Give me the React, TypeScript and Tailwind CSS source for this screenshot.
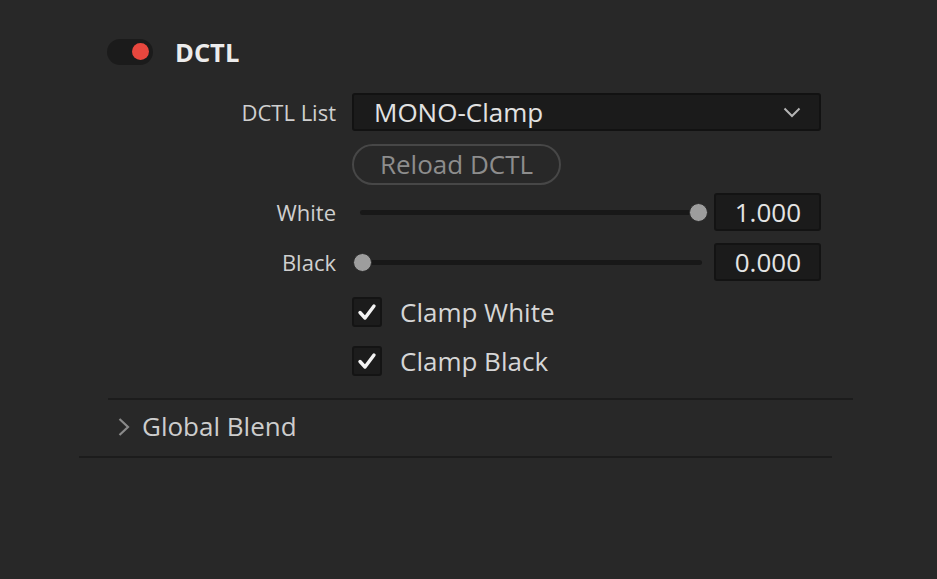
import React from "react";

const font = { fontFamily: '"Open Sans", "Noto Sans", sans-serif' };

function Check() {
  return (
    <div className="w-[30px] h-[30px] rounded-[3px] bg-[#1c1c1c] border-2 border-[#141414] flex items-center justify-center">
      <svg width="20" height="18" viewBox="0 0 20 18">
        <path d="M3 9.5 L8 15 L17 3" fill="none" stroke="#f4f4f4" strokeWidth="3.4" strokeLinecap="round" strokeLinejoin="round" />
      </svg>
    </div>
  );
}

function Slider({ value, label }: { value: number; label: string }) {
  return (
    <div className="flex items-center h-[38px]">
      <div className="w-[245px] text-right pr-[16px] text-[22px] text-[#cfcfcf]">{label}</div>
      <div className="relative w-[356px] h-[38px] flex items-center">
        <div className="absolute left-[8px] right-[6px] h-[5px] rounded-full bg-[#181818]" />
        <div
          className="absolute w-[19px] h-[19px] rounded-full bg-[#9d9d9d] border border-[#2a2a2a]"
          style={{ left: value === 1 ? 337 : 1 }}
        />
      </div>
      <div className="ml-[6px] w-[107px] h-[38px] bg-[#1b1b1b] border-2 border-[#131313] rounded-[3px] flex items-center justify-end pr-[18px] text-[26px] text-[#e4e4e4]">
        {value.toFixed(3)}
      </div>
    </div>
  );
}

export default function App() {
  return (
    <div className="w-[937px] h-[579px] bg-[#282828] overflow-hidden" style={font}>
      <div className="flex items-center pt-[38px] pl-[107px]">
        <div className="w-[46px] h-[26px] rounded-full bg-[#1b1b1b] relative">
          <div className="absolute left-[25px] top-[4px] w-[17px] h-[17px] rounded-full bg-[#e8473e]" />
        </div>
        <div className="ml-[22px] text-[25.5px] font-bold text-[#ececec] leading-[28px]">DCTL</div>
      </div>

      <div className="pl-[107px] mt-[27px]">
        <div className="flex items-center h-[38px]">
          <div className="w-[245px] text-right pr-[16px] text-[22px] text-[#cfcfcf]">DCTL List</div>
          <div className="w-[469px] h-[38px] bg-[#1b1b1b] border-2 border-[#121212] rounded-[3px] flex items-center justify-between pl-[20px] pr-[18px]">
            <span className="text-[26px] text-[#e2e2e2]">MONO-Clamp</span>
            <svg width="18" height="11" viewBox="0 0 18 11">
              <path d="M1.5 1.5 L9 9 L16.5 1.5" fill="none" stroke="#b4b4b4" strokeWidth="2" />
            </svg>
          </div>
        </div>

        <div className="flex items-center mt-[13px] h-[41px]">
          <div className="w-[245px]" />
          <div className="w-[209px] h-[41px] rounded-full border-2 border-[#474747] flex items-center justify-center text-[26px] text-[#8d8d8d]">
            Reload DCTL
          </div>
        </div>

        <div className="mt-[8px]">
          <Slider label="White" value={1} />
        </div>
        <div className="mt-[12px]">
          <Slider label="Black" value={0} />
        </div>

        <div className="flex items-center mt-[16px] h-[30px]">
          <div className="w-[245px]" />
          <Check />
          <span className="ml-[18px] text-[26px] text-[#d6d6d6]">Clamp White</span>
        </div>
        <div className="flex items-center mt-[19px] h-[30px]">
          <div className="w-[245px]" />
          <Check />
          <span className="ml-[18px] text-[26px] text-[#d6d6d6]">Clamp Black</span>
        </div>
      </div>

      <div className="ml-[108px] w-[745px] h-[2px] bg-[#1c1c1c] mt-[22px]" />
      <div className="flex items-center h-[56px] pl-[117px] pb-[3px]">
        <svg width="14" height="20" viewBox="0 0 14 20">
          <path d="M2.5 2 L11 10 L2.5 18" fill="none" stroke="#8a8a8a" strokeWidth="2.2" />
        </svg>
        <span className="ml-[11px] text-[26px] text-[#cdcdcd]">Global Blend</span>
      </div>
      <div className="ml-[79px] w-[753px] h-[2px] bg-[#1c1c1c]" />
    </div>
  );
}
